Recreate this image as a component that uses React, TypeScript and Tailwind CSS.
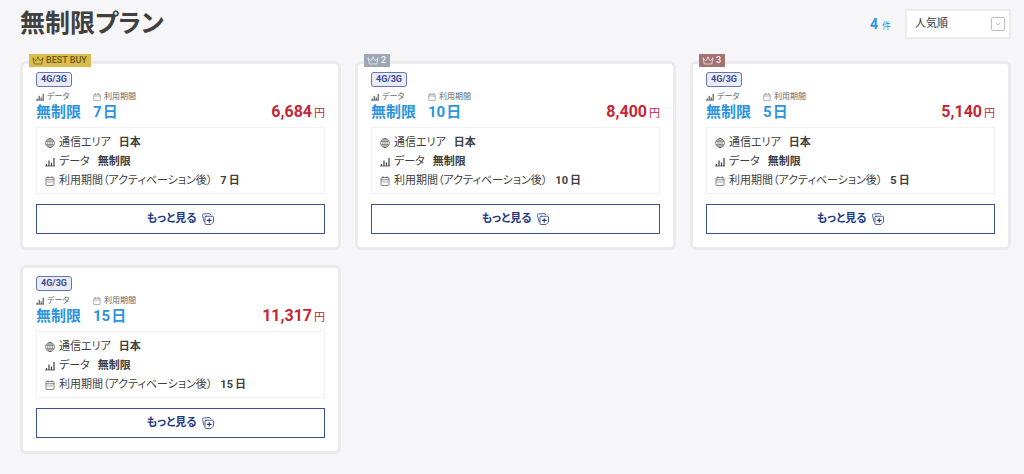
import type { ReactNode } from "react";

type Plan = { days: number; price: string; rank?: 1 | 2 | 3 };

const plans: Plan[] = [
  { days: 7, price: "6,684", rank: 1 },
  { days: 10, price: "8,400", rank: 2 },
  { days: 5, price: "5,140", rank: 3 },
  { days: 15, price: "11,317" },
];

const ribbons = {
  1: { label: "BEST BUY", style: "bg-[#dbbd4f] text-[#6a5818]" },
  2: { label: "2", style: "bg-[#9ea8b5] text-[#f1f3f6]" },
  3: { label: "3", style: "bg-[#a37373] text-[#f5ecec]" },
};

function CrownIcon() {
  return (
    <svg className="h-[9px] w-3" viewBox="0 0 24 18" fill="none" stroke="currentColor" strokeWidth="1.500" strokeLinejoin="round" aria-hidden="true">
      <path d="M4.500 16 2.500 5.500 8 9.500 12 3l4 6.500 5.500-4L19.500 16Z" />
      <circle cx="2.500" cy="4.500" r="0.800" />
      <circle cx="12" cy="2.500" r="0.800" />
      <circle cx="21.500" cy="4.500" r="0.800" />
    </svg>
  );
}

function ChartIcon({ className }: { className: string }) {
  return (
    <svg className={className} viewBox="0 0 20 20" fill="none" stroke="currentColor" aria-hidden="true">
      <path d="M0 18h20" strokeWidth="1.500" />
      <path d="M3 18v-4M8 18V7M13 18v-7M18 18V2" strokeWidth="2.400" />
    </svg>
  );
}

function CalendarIcon({ className, dots }: { className: string; dots?: boolean }) {
  return (
    <svg className={className} viewBox="0 0 20 20" fill="none" stroke="currentColor" strokeWidth="1.300" aria-hidden="true">
      <rect x="2" y="3" width="16" height="16" rx="2" />
      <path d="M2 7.500h16M6 0.500v4M14 0.500v4" />
      {dots && <path d="M5 12h2M9 12h2M13 12h2" strokeWidth="1.800" />}
    </svg>
  );
}

function GlobeIcon({ className }: { className: string }) {
  return (
    <svg className={className} viewBox="0 0 20 20" fill="none" stroke="currentColor" strokeWidth="1.200" aria-hidden="true">
      <circle cx="10" cy="10" r="9" />
      <ellipse cx="10" cy="10" rx="4.500" ry="9" />
      <path d="M10 1v18M2 6.500h16M2 13.500h16" />
    </svg>
  );
}

function MoreIcon() {
  return (
    <svg className="size-3" viewBox="0 0 24 24" fill="none" stroke="currentColor" strokeWidth="1.600" strokeLinecap="round" strokeLinejoin="round" aria-hidden="true">
      <path d="M4 17 1 5Q0.500 2.500 3 2L15 1q2 0 2.500 2.500" />
      <path d="M8 6.500h13q2 0 2 2V18l-5 5H8q-2 0-2-2V8.500q0-2 2-2Z" />
      <path d="M14.500 11v7.500M10.500 14.700h8" strokeWidth="2.200" />
    </svg>
  );
}

function Detail({ icon, label, value }: { icon: ReactNode; label: string; value: ReactNode }) {
  return (
    <div className="flex items-center">
      <dt className="flex items-center gap-1 whitespace-nowrap">
        {icon}
        {label}
      </dt>
      <dd className="ml-2 whitespace-nowrap font-bold">{value}</dd>
    </div>
  );
}

function Summary({ icon, label, value }: { icon: ReactNode; label: string; value: ReactNode }) {
  return (
    <div>
      <dt className="flex items-center gap-[3px] text-[8px] leading-[10px] text-[#666]">
        {icon}
        {label}
      </dt>
      <dd className="text-[15px] leading-5 font-bold text-[#2c94e0]">{value}</dd>
    </div>
  );
}

function PlanCard({ plan }: { plan: Plan }) {
  const ribbon = plan.rank && ribbons[plan.rank];
  return (
    <article className="relative rounded-md border-3 border-[#ebebeb] bg-white px-[13px] pt-2 pb-[13px]">
      {ribbon && (
        <div className={`absolute -top-[10px] left-[6px] flex h-[13px] items-center gap-[2px] pr-1 pl-[3px] text-[9px] leading-[13px] font-medium ${ribbon.style}`}>
          <CrownIcon />
          {ribbon.label}
        </div>
      )}
      <div className="flex">
        <span className="rounded-[3px] border border-[#6675b5] bg-[#e9ecf7] px-1 text-[9px] leading-[13px] font-bold text-[#3b4a91]">4G/3G</span>
      </div>
      <div className="mt-[5px] flex items-end justify-between">
        <dl className="flex gap-3">
          <Summary icon={<ChartIcon className="size-2 text-[#333]" />} label="データ" value="無制限" />
          <Summary
            icon={<CalendarIcon className="size-2" />}
            label="利用期間"
            value={
              <span className="flex gap-px">
                <span>{plan.days}</span>日
              </span>
            }
          />
        </dl>
        <p className="flex items-baseline gap-[2px] text-[11px] leading-4 text-[#c42735]">
          <span className="text-base leading-4 font-bold">{plan.price}</span>円
        </p>
      </div>
      <dl className="mt-[5px] flex flex-col gap-[2px] border border-[#f0f0f0] px-2 pt-[6px] pb-1 text-[11px] leading-[17px] text-[#404040]">
        <Detail icon={<GlobeIcon className="size-[10px]" />} label="通信エリア" value="日本" />
        <Detail icon={<ChartIcon className="size-[10px]" />} label="データ" value="無制限" />
        <Detail
          icon={<CalendarIcon className="size-[10px]" dots />}
          label="利用期間（アクティベーション後）"
          value={
            <span className="flex gap-[2px]">
              <span>{plan.days}</span>日
            </span>
          }
        />
      </dl>
      <button type="button" className="mt-[10px] flex h-[30px] w-full items-center justify-center gap-[6px] border border-[#3d4f9b] bg-white text-[11px] font-bold text-[#223785]">
        もっと見る
        <MoreIcon />
      </button>
    </article>
  );
}

export default function App() {
  return (
    <main className="min-h-screen bg-[#f6f6f9] pt-[9px] pr-[13px] pb-5 pl-5 font-['Roboto','Noto_Sans_CJK_JP',sans-serif] text-[#404040] [font-feature-settings:'palt']">
      <header className="flex items-center justify-between">
        <h1 className="text-[25px] leading-[30px] font-bold">無制限プラン</h1>
        <div className="flex items-center gap-[14px]">
          <p className="flex items-baseline gap-1 text-[9px] text-[#2c94e0]">
            <span className="text-sm font-bold">{plans.length}</span>件
          </p>
          <div className="relative">
            <select aria-label="並び順" className="block h-[30px] w-[106px] appearance-none rounded-none border-2 border-[#ebebeb] bg-white pl-2 text-[11px] text-[#333]">
              <option>人気順</option>
            </select>
            <svg className="pointer-events-none absolute top-2 right-[6px] size-[14px]" viewBox="0 0 14 14" fill="none" stroke="#bdbdbd" aria-hidden="true">
              <rect x="0.500" y="0.500" width="13" height="13" rx="1.500" />
              <path d="m5 6 2 2 2-2" />
            </svg>
          </div>
        </div>
      </header>
      <section className="mt-[22px] grid grid-cols-3 gap-x-[14px] gap-y-[15px]">
        {plans.map((plan) => (
          <PlanCard key={plan.days} plan={plan} />
        ))}
      </section>
    </main>
  );
}
